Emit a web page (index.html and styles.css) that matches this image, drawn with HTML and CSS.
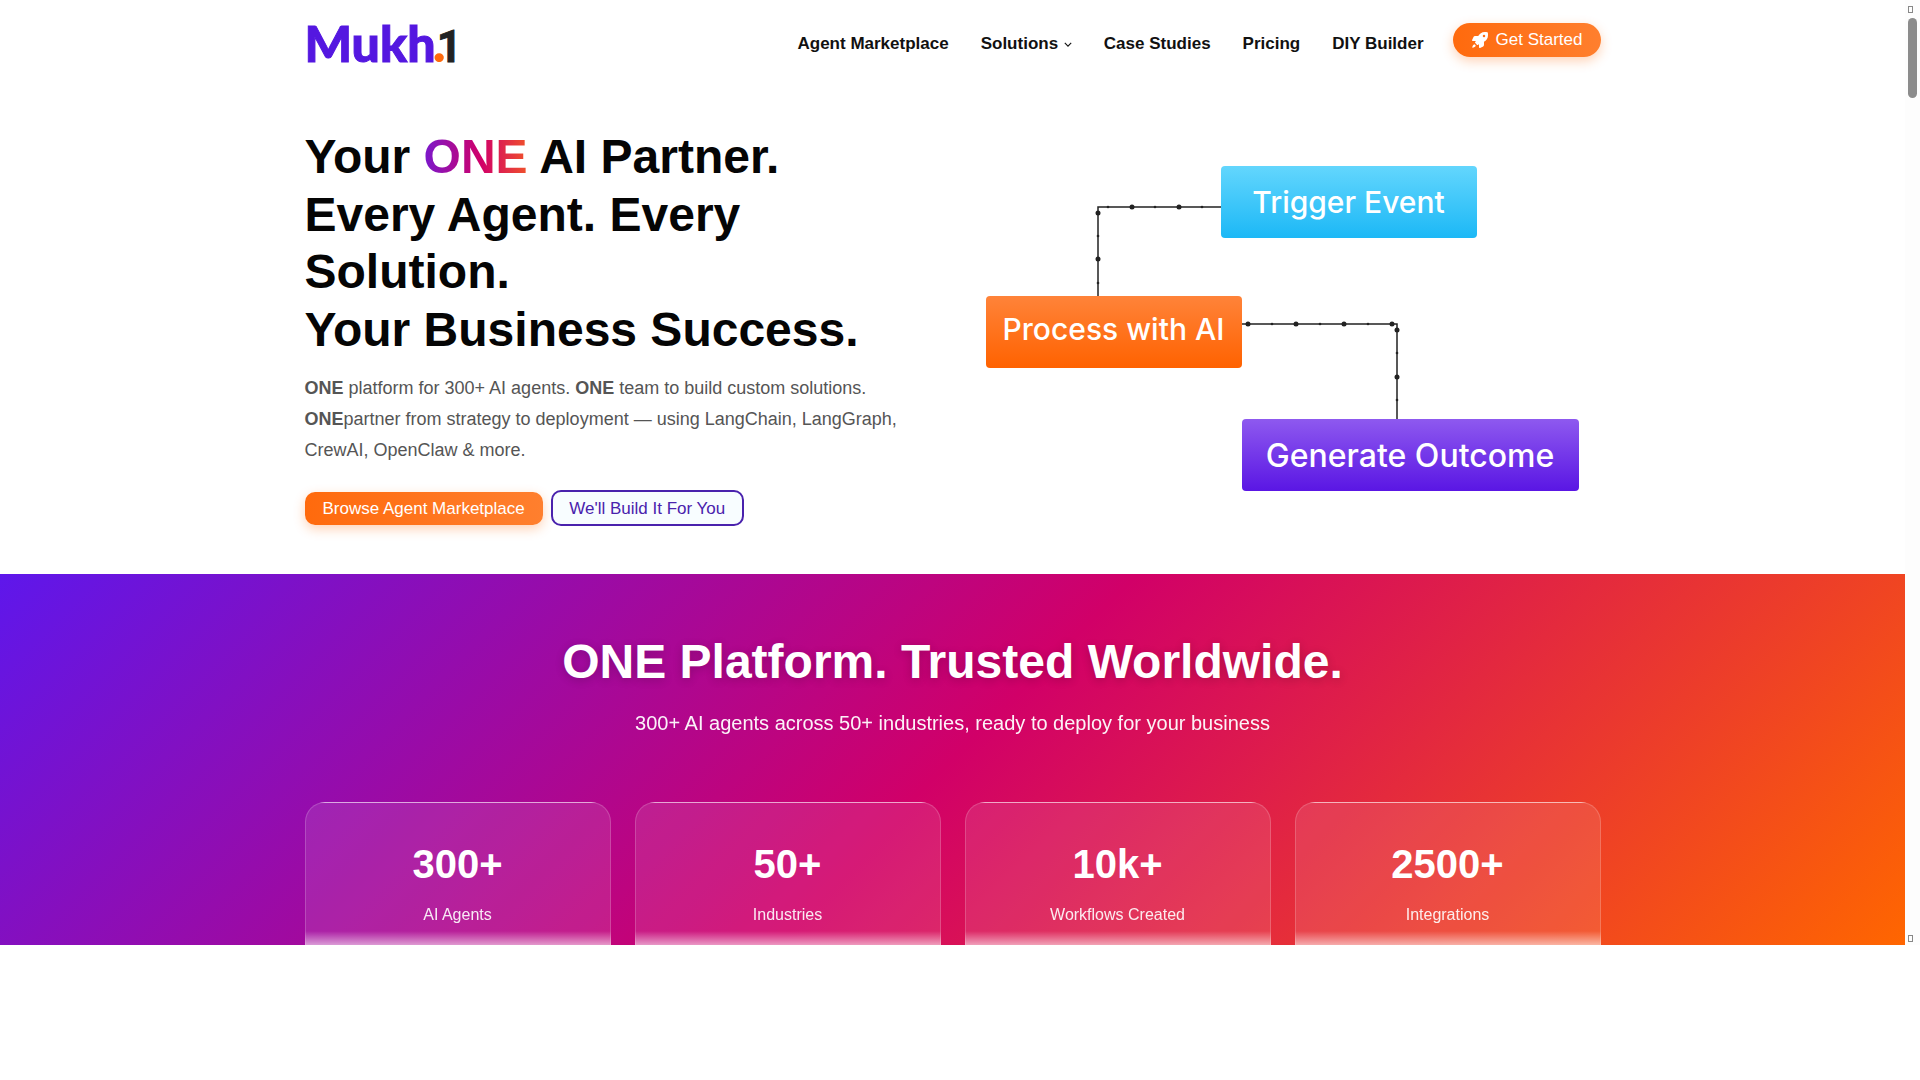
FILE: index.html
```html
<!DOCTYPE html>
<html lang="en">
<head>
  <meta charset="UTF-8" />
  <title>Mukh.1</title>
  <link rel="stylesheet" href="styles.css">
</head>
<body>

<div class="frame">
  <div class="page">

    <header class="site-header">
      <div class="container header-row">
        <a class="logo">Mukh<span class="logo-dot">.</span><span class="logo-one">1</span></a>
        <nav class="main-nav">
          <a>Agent Marketplace</a>
          <a class="has-menu">Solutions
            <svg class="chevron" viewBox="0 0 10 6" width="8" height="5"><path d="M1 1l4 4 4-4" fill="none" stroke="#111" stroke-width="1.4"/></svg>
          </a>
          <a>Case Studies</a>
          <a>Pricing</a>
          <a>DIY Builder</a>
        </nav>
        <a class="btn-start">
          <svg class="rocket" viewBox="0 0 512 512" width="16" height="16"><path fill-rule="evenodd" d="M505.1 19.100c-1.200-5.500-6.700-11-12.200-12.200C460.700 0 435.500 0 410.400 0 307.200 0 245.300 55.200 199.100 128H94.800c-16.300 0-35.600 11.900-42.900 26.500L2.500 253.300A28.400 28.400 0 0 0 0 264a24 24 0 0 0 24 24h103.800l-22.500 22.500c-11.400 11.400-13 32.300 0 45.300l50.900 50.800c11.200 11.200 32.200 13.200 45.300 0l22.500-22.500V488a24 24 0 0 0 24 24 28.600 28.600 0 0 0 10.700-2.500l98.700-49.400c14.600-7.300 26.500-26.500 26.500-42.900V312.800c72.600-46.300 128-108.400 128-211.100.1-25.200.1-50.400-6.900-82.600zM384 168a40 40 0 1 1 40-40 40 40 0 0 1-40 40z" fill="#fff"/><path d="M8 504c4-60 28-100 72-112l40 40c-12 44-52 68-112 72z" fill="#fff"/></svg>
          Get Started
        </a>
      </div>
    </header>

    <section class="hero">
      <div class="container hero-row">
        <div class="hero-text">
          <h1>Your <span class="grad-text">ONE</span> AI Partner.<br>Every Agent. Every Solution.<br>Your Business Success.</h1>
          <p class="hero-lead"><strong>ONE</strong> platform for 300+ AI agents. <strong>ONE</strong> team to build custom solutions.<br><strong>ONE</strong>partner from strategy to deployment — using LangChain, LangGraph, CrewAI, OpenClaw &amp; more.</p>
          <div class="hero-btns">
            <a class="btn-orange">Browse Agent Marketplace</a>
            <a class="btn-outline">We'll Build It For You</a>
          </div>
        </div>
        <div class="flow">
          <svg class="flow-lines" viewBox="0 0 636 400" width="636" height="400">
            <path d="M256 119H133V208" />
            <path d="M277 236H432V331" />
            <g class="dot-big">
              <circle cx="167" cy="119" r="2.500"/><circle cx="214" cy="119" r="2.500"/><circle cx="133" cy="125" r="2.500"/><circle cx="133" cy="171" r="2.500"/>
              <circle cx="283" cy="236" r="2.500"/><circle cx="331" cy="236" r="2.500"/><circle cx="379" cy="236" r="2.500"/><circle cx="427" cy="236" r="2.500"/>
              <circle cx="432" cy="242" r="2.500"/><circle cx="432" cy="289" r="2.500"/>
            </g>
            <g class="dot-small">
              <circle cx="143" cy="119" r="1.300"/><circle cx="190" cy="119" r="1.300"/><circle cx="237" cy="119" r="1.300"/><circle cx="133" cy="148" r="1.300"/><circle cx="133" cy="195" r="1.300"/>
              <circle cx="307" cy="236" r="1.300"/><circle cx="355" cy="236" r="1.300"/><circle cx="403" cy="236" r="1.300"/><circle cx="432" cy="265" r="1.300"/><circle cx="432" cy="312" r="1.300"/>
            </g>
          </svg>
          <div class="flow-node node-trigger">Trigger Event</div>
          <div class="flow-node node-process">Process with AI</div>
          <div class="flow-node node-outcome">Generate Outcome</div>
        </div>
      </div>
    </section>

    <section class="stats">
      <div class="container">
        <h2>ONE Platform. Trusted Worldwide.</h2>
        <p class="stats-sub">300+ AI agents across 50+ industries, ready to deploy for your business</p>
        <div class="stats-grid">
          <div class="stat-card"><div class="stat-num">300+</div><div class="stat-label">AI Agents</div></div>
          <div class="stat-card"><div class="stat-num">50+</div><div class="stat-label">Industries</div></div>
          <div class="stat-card"><div class="stat-num">10k+</div><div class="stat-label">Workflows Created</div></div>
          <div class="stat-card"><div class="stat-num">2500+</div><div class="stat-label">Integrations</div></div>
        </div>
      </div>
    </section>

  </div>

  <div class="scrollbar">
    <span class="scroll-arrow"></span>
    <span class="scroll-thumb"></span>
    <span class="scroll-arrow"></span>
  </div>
</div>

</body>
</html>
```

FILE: styles.css
```css
* {
  box-sizing: border-box;
}

html, body {
  height: 100%;
  overflow: hidden;
}

body {
  margin: 0;
  background-color: #fff;
  color: #111;
  font-family: "Liberation Sans", Arial, sans-serif;
}

a {
  cursor: pointer;
  text-decoration: none;
}

.frame {
  display: flex;
  height: 945px;
  overflow: hidden;
}

.page {
  flex: 1;
  min-width: 0;
}

.container {
  width: 1296px;
  margin: 0 auto;
}

/* scrollbar column */
.scrollbar {
  width: 15px;
  display: flex;
  flex-direction: column;
  align-items: flex-start;
  padding: 6px 0 3px 3px;
  background-color: #fdfdfd;
}

.scroll-arrow {
  width: 5px;
  height: 7px;
  border: 1px solid #888;
}

.scroll-thumb {
  width: 9px;
  height: 80px;
  margin: 5px 0 auto;
  background-color: #8c8c8c;
  border-radius: 5px;
}

/* header */
.site-header {
  height: 88px;
}

.header-row {
  display: flex;
  align-items: center;
  height: 88px;
}

.logo {
  display: flex;
  align-items: baseline;
  margin-top: -2px;
  color: #5417e0;
  font-family: "Lato", sans-serif;
  font-size: 50px;
  font-weight: 900;
  line-height: 1;
  -webkit-text-stroke: 1px #5417e0;
}

.logo-dot {
  margin-left: -3px;
  color: #ff6a0d;
  font-size: 56px;
  line-height: 0;
  -webkit-text-stroke: 0;
}

.logo-one {
  margin-left: -9px;
  color: #222;
  font-family: "Roboto", sans-serif;
  font-size: 44px;
  font-weight: 700;
  -webkit-text-stroke: 0.8px #222;
}

.main-nav {
  display: flex;
  gap: 32px;
  margin-left: auto;
  padding-bottom: 1px;
  font-size: 17px;
  font-weight: 700;
}

.main-nav a {
  color: #111;
}

.chevron {
  margin-left: 1px;
  vertical-align: 2px;
}

.btn-start {
  display: flex;
  align-items: center;
  gap: 8px;
  height: 34px;
  margin: -8px 0 0 29px;
  padding: 0 18px 0 19px;
  color: #fff;
  font-size: 17px;
  background: linear-gradient(90deg, #ff6a0d, #ff7f2e);
  border-radius: 17px;
  box-shadow: 0 4px 12px rgba(255, 106, 13, 0.3);
}

/* hero */
.hero {
  height: 486px;
}

.hero-row {
  display: flex;
  justify-content: space-between;
}

.hero-text {
  width: 636px;
}

.hero h1 {
  margin: 40px 0 0;
  font-size: 48px;
  font-weight: 700;
  line-height: 57.600px;
  color: #050505;
}

.grad-text {
  background: linear-gradient(90deg, #7a18cc, #d10068 55%, #f0522a);
  -webkit-background-clip: text;
  background-clip: text;
  color: transparent;
}

.hero-lead {
  margin: 15px 0 0;
  color: #555;
  font-size: 18px;
  line-height: 31px;
}

.hero-btns {
  display: flex;
  align-items: center;
  gap: 8px;
  margin-top: 24px;
}

.btn-orange {
  padding: 8px 18px;
  color: #fff;
  font-size: 17px;
  line-height: 17px;
  background: linear-gradient(90deg, #ff6a0d, #ff7f2e);
  border-radius: 10px;
  box-shadow: 0 4px 12px rgba(255, 106, 13, 0.3);
}

.btn-outline {
  padding: 7.500px 16.500px;
  color: #4a22ad;
  font-size: 17px;
  line-height: 17px;
  background-color: #f8fdff;
  border: 2px solid #4a22ad;
  border-radius: 10px;
}

/* flow diagram */
.flow {
  position: relative;
  width: 636px;
  height: 400px;
}

.flow-lines {
  position: absolute;
  left: 0;
  top: 0;
}

.flow-lines path {
  fill: none;
  stroke: #222;
  stroke-width: 1.500;
}

.flow-lines circle {
  fill: #222;
}

.flow-node {
  position: absolute;
  display: flex;
  align-items: center;
  justify-content: center;
  height: 72px;
  color: #fff;
  font-family: "Inter", sans-serif;
  font-size: 30px;
  font-weight: 500;
  border-radius: 4px;
}

.node-trigger {
  left: 256px;
  top: 78px;
  width: 256px;
  background: linear-gradient(180deg, #63d6fd, #1cb8f6);
}

.node-process {
  left: 21px;
  top: 208px;
  width: 256px;
  padding-bottom: 7px;
  background: linear-gradient(180deg, #ff8339, #ff6200);
}

.node-outcome {
  left: 277px;
  top: 331px;
  width: 337px;
  font-size: 32px;
  background: linear-gradient(180deg, #8e59ef, #5a16e4);
}

/* stats band */
.stats {
  height: 371px;
  padding-top: 59px;
  color: #fff;
  text-align: center;
  background: linear-gradient(135deg, #5e17eb 0%, #d10068 50%, #ff6600 100%);
}

.stats h2 {
  margin: 0;
  font-size: 48px;
  font-weight: 700;
  line-height: 58px;
  text-shadow: 0 2px 10px rgba(0, 0, 0, 0.2);
}

.stats-sub {
  margin: 20px 0 0;
  font-size: 20px;
  line-height: 24px;
  opacity: 0.95;
}

.stats-grid {
  display: grid;
  grid-template-columns: repeat(4, 1fr);
  gap: 24px;
  margin-top: 67px;
}

.stat-card {
  height: 143px;
  padding-top: 37px;
  background: linear-gradient(180deg, rgba(255, 255, 255, 0) calc(100% - 14px), rgba(255, 255, 255, 0.55)), rgba(255, 255, 255, 0.1);
  border: 1px solid rgba(255, 255, 255, 0.18);
  border-bottom: 0;
  border-radius: 20px 20px 0 0;
}

.stat-num {
  font-size: 40px;
  font-weight: 700;
  line-height: 48px;
}

.stat-label {
  margin-top: 17px;
  font-size: 16px;
  line-height: 20px;
  opacity: 0.9;
}
```
